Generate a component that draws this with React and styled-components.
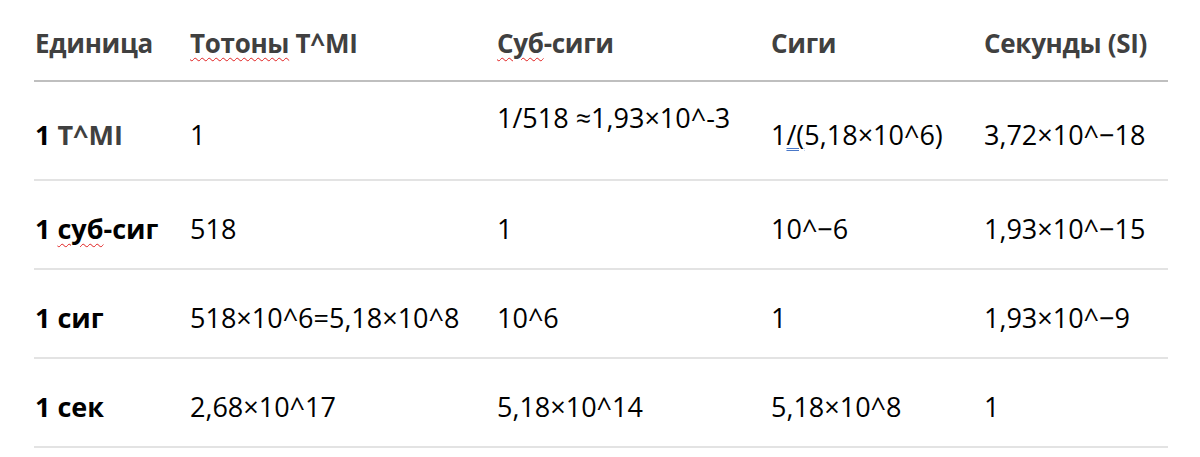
import React from "react";
import styled, { createGlobalStyle } from "styled-components";

const GlobalStyle = createGlobalStyle`
  html, body {
    margin: 0;
    padding: 0;
    background: #ffffff;
  }
  body {
    font-family: "Open Sans", "Noto Sans", "DejaVu Sans", sans-serif;
  }
`;

const COLUMNS = "155px 307px 274px 213px 1fr";

export const Page = styled.div`
  width: 1200px;
  height: 457px;
  background: #fff;
  overflow: hidden;
`;

export const Table = styled.div`
  margin-left: 34px;
  width: 1134px;
  display: flex;
  flex-direction: column;
`;

export const HeadRow = styled.div`
  display: grid;
  grid-template-columns: ${COLUMNS};
  padding: 25px 0 19px;
  border-bottom: 2px solid #bfbfbf;
`;

export const HeadCell = styled.div`
  padding-left: 1px;
  font-size: 26px;
  line-height: 36px;
  font-weight: 700;
  color: #404040;
  white-space: nowrap;
  letter-spacing: -0.3px;
`;

export const Row = styled.div`
  display: grid;
  grid-template-columns: ${COLUMNS};
  min-height: ${(p) => p.$height}px;
  border-bottom: 2px solid #e3e3e3;
`;

export const Cell = styled.div`
  align-self: ${(p) => (p.$top ? "start" : "center")};
  padding-top: ${(p) => (p.$top ? "18px" : "8px")};
  padding-left: 1px;
  font-size: 27px;
  line-height: 36px;
  font-weight: ${(p) => (p.$bold ? 700 : 400)};
  color: #000;
  white-space: nowrap;
`;

export const Muted = styled.span`
  color: #404040;
`;

export const Spell = styled.span`
  text-decoration: underline wavy #e02020;
  text-decoration-thickness: 1px;
  text-underline-offset: 4px;
`;

export const Grammar = styled.span`
  text-decoration: underline double #4a78c8;
  text-decoration-thickness: 1px;
  text-underline-offset: 3px;
`;

const rows = [
  {
    height: 97,
    cells: [
      <>
        1 <Muted>T^MI</Muted>
      </>,
      "1",
      { text: "1/518 ≈1,93×10^-3", top: true },
      <>
        1<Grammar>/(</Grammar>5,18×10^6)
      </>,
      "3,72×10^−18",
    ],
  },
  {
    height: 87,
    cells: [
      <>
        1 <Spell>суб</Spell>-сиг
      </>,
      "518",
      "1",
      "10^−6",
      "1,93×10^−15",
    ],
  },
  {
    height: 87,
    cells: ["1 сиг", "518×10^6=5,18×10^8", "10^6", "1", "1,93×10^−9"],
  },
  {
    height: 87,
    cells: ["1 сек", "2,68×10^17", "5,18×10^14", "5,18×10^8", "1"],
  },
];

function App() {
  return (
    <Page>
      <GlobalStyle />
      <Table>
        <HeadRow>
          <HeadCell>Единица</HeadCell>
          <HeadCell>
            <Spell>Тотоны</Spell> T^MI
          </HeadCell>
          <HeadCell>
            <Spell>Суб</Spell>-сиги
          </HeadCell>
          <HeadCell>Сиги</HeadCell>
          <HeadCell>Секунды (SI)</HeadCell>
        </HeadRow>
        {rows.map((row, i) => (
          <Row key={i} $height={row.height}>
            {row.cells.map((c, j) => {
              const isObj = c && typeof c === "object" && "text" in c;
              return (
                <Cell key={j} $bold={j === 0} $top={isObj && c.top}>
                  {isObj ? c.text : c}
                </Cell>
              );
            })}
          </Row>
        ))}
      </Table>
    </Page>
  );
}

export default App;
